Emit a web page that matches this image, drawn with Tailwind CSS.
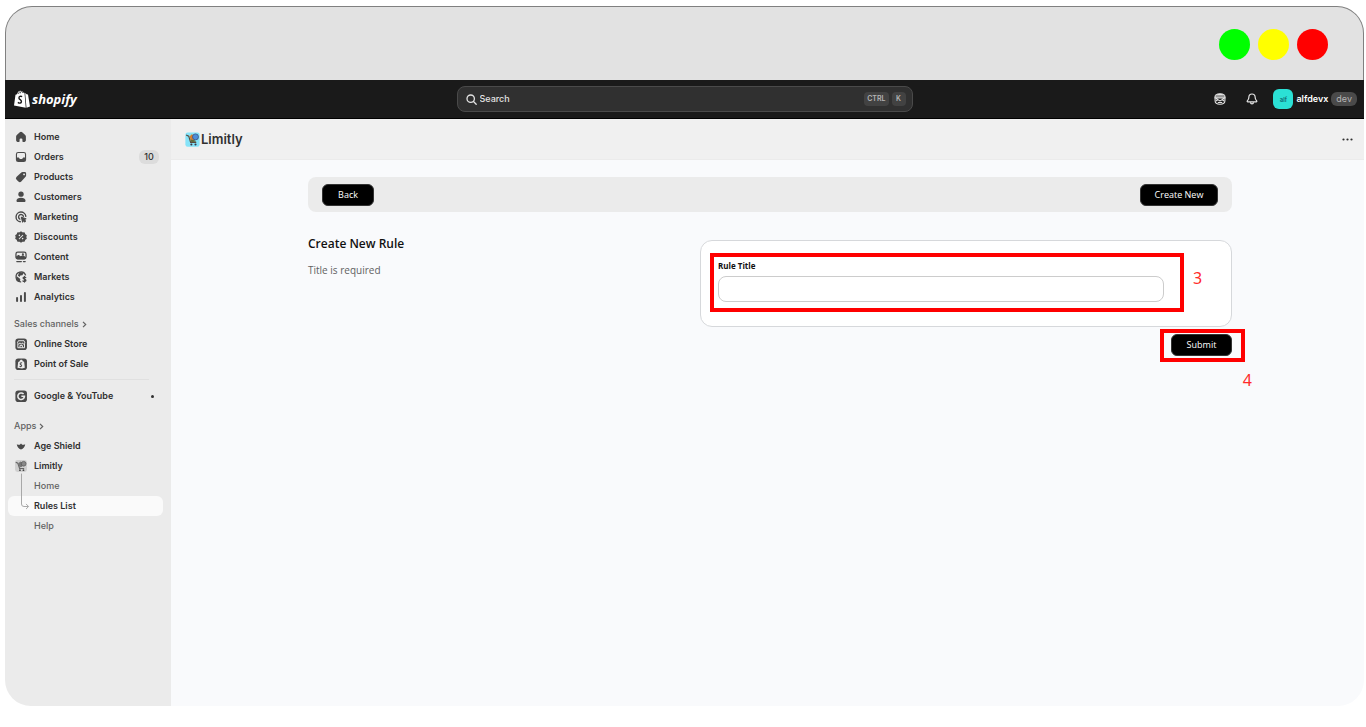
<!DOCTYPE html>
<html lang="en">
<head>
  <meta charset="UTF-8">
  <meta name="viewport" content="width=device-width, initial-scale=1.0">
  <title>Limitly - Create New Rule</title>
  <script src="https://cdn.jsdelivr.net/npm/@tailwindcss/browser@4"></script>
</head>
<body class="bg-white font-['Inter',sans-serif] text-[#303030]">
  <div class="flex flex-col min-h-screen pt-[6px] pl-[5px] pr-[2px] pb-[21px]">

    <!-- Window title bar -->
    <div class="flex h-[74px] shrink-0 items-center justify-end gap-2 rounded-t-[27px] border border-b-0 border-[#808080] bg-[#e2e2e2] pr-[35px] pt-[2px]">
      <span class="size-[31px] rounded-full bg-[#00ff00]"></span>
      <span class="size-[31px] rounded-full bg-[#ffff00]"></span>
      <span class="size-[31px] rounded-full bg-[#ff0000]"></span>
    </div>

    <!-- Shopify top bar -->
    <header class="grid h-[39px] shrink-0 grid-cols-[1fr_456px_1fr] items-center border-b border-black bg-[#1a1a1a] text-white">
      <a href="#" class="flex items-center gap-[2px] pl-[9px]">
        <svg class="h-[18px] w-[16px]" viewBox="0 0 32 36" fill="none">
          <path fill="#fff" d="M3 9.500 6 8.600C7 4.500 9.500 1.400 12.500 1.300c1-.1 1.800.4 2.400 1.200 2.400-.3 3.800 1.600 4.500 3.600l1.600-.5L23.500 35.500 0 31.200z"/>
          <path fill="#fff" d="m22.300 6 3 2.700 2.700.4L32 33l-7 2.300z"/>
          <path stroke="#1a1a1a" stroke-width="1.400" d="M8.300 8c.8-2.700 2.500-4.700 4.400-4.900M12.300 6.900c.3-2 1.200-3.700 2.700-4.100M17 5.800c0-1.200-.3-2.500-1.200-3"/>
          <path stroke="#1a1a1a" stroke-width="2.800" d="M16.300 13.300c-3-1.500-6.300-.3-6.400 2.500-.1 3.700 5.300 3.500 5 7.400-.2 3.200-3.800 4-7.200 1.500"/>
        </svg>
        <span class="font-['Open_Sans',sans-serif] text-[13px] leading-[18px] font-bold italic">shopify</span>
      </a>
      <label class="flex h-[26px] items-center rounded-lg border border-[#4a4a4a] bg-[#303030] pl-2 pr-[6px]">
        <svg class="size-[11px] shrink-0" viewBox="0 0 11 11" fill="none" stroke="#e3e3e3" stroke-width="1.300" stroke-linecap="round"><circle cx="4.700" cy="4.700" r="3.700"/><path d="m7.500 7.500 2.700 2.700"/></svg>
        <input type="text" aria-label="Search" placeholder="Search" class="ml-[3px] min-w-0 flex-1 bg-transparent text-[9px] font-medium text-white outline-none placeholder:text-[#e3e3e3]">
        <kbd class="rounded bg-[#424242] px-[3px] font-['Inter',sans-serif] text-[7px] leading-[14px] font-semibold text-[#b5b5b5]">CTRL</kbd>
        <kbd class="ml-[3px] w-[14px] rounded bg-[#424242] text-center font-['Inter',sans-serif] text-[7px] leading-[14px] font-semibold text-[#b5b5b5]">K</kbd>
      </label>
      <div class="flex items-center justify-end pr-[7px]">
        <button type="button" aria-label="Sidekick" class="mr-5">
          <svg class="size-[12px]" viewBox="0 0 22 22" fill="none" stroke="#e3e3e3" stroke-width="2"><path fill="#e3e3e3" d="M2 7C2 3.500 6 1.500 11 1.500S20 3.500 20 7z"/><path d="M2 7v7c0 4.500 4 6.500 9 6.500s9-2 9-6.500V7"/><path d="M1 9h20M3.500 10l7.500 4.500 7.500-4.500M3.500 14.500l3.500-2M18.500 14.500l-3.500-2M7 17.500h8"/><path stroke="#1a1a1a" stroke-width="1.300" d="M3 5.500h16"/></svg>
        </button>
        <button type="button" aria-label="Notifications" class="mr-[15px]">
          <svg class="h-[12px] w-[12px]" viewBox="0 0 24 24" fill="none" stroke="#e3e3e3" stroke-width="2.400" stroke-linejoin="round"><path d="M12 2c-4 0-6.300 3-6.300 6.500 0 4-1 5.300-3 7.200-.8.800-.3 2 .8 2h17c1.100 0 1.600-1.200.8-2-2-1.900-3-3.200-3-7.200C18.300 5 16 2 12 2z"/><path d="M9 18.500c0 4.500 6 4.500 6 0"/></svg>
        </button>
        <button type="button" class="flex items-center text-[9px]">
          <span class="flex size-5 items-center justify-center rounded-md bg-[#2be0d5] text-[6px] font-medium text-[#0b5a66]">alf</span>
          <span class="ml-[3px] leading-[14px] font-semibold">alfdevx</span>
          <span class="ml-[3px] rounded-md bg-[#4a4a4a] px-[5px] leading-[14px] text-[#b5b5b5]">dev</span>
        </button>
      </div>
    </header>

    <div class="flex flex-1 overflow-hidden rounded-b-[26px]">

      <!-- Sidebar -->
      <nav class="w-[166px] shrink-0 bg-[#ebebeb] pt-2 pl-[3px] pr-2 text-[9px] leading-5 font-semibold">
        <ul>
          <li><a href="#" class="flex h-5 items-center gap-[6px] pl-[6px]">
            <svg class="size-[14px]" viewBox="0 0 20 20" fill="#4a4a4a"><path d="M8.300 3.200a2.600 2.600 0 0 1 3.400 0l4.300 3.900c.6.600 1 1.300 1 2.200v5.500c0 1.200-.9 2.200-2.100 2.200H13c-.6 0-1-.4-1-1v-2.500a1.500 1.500 0 0 0-1.500-1.500h-1A1.500 1.500 0 0 0 8 13.500V16c0 .6-.4 1-1 1H5.100C3.900 17 3 16 3 14.800V9.300c0-.9.400-1.600 1-2.200z"/></svg>
            Home</a></li>
          <li><a href="#" class="flex h-5 items-center gap-[6px] pl-[6px]">
            <svg class="size-[14px]" viewBox="0 0 20 20" fill="#4a4a4a"><path fill-rule="evenodd" d="M6 2.700h8A3.300 3.300 0 0 1 17.300 6v8a3.300 3.300 0 0 1-3.300 3.300H6A3.300 3.300 0 0 1 2.700 14V6A3.300 3.300 0 0 1 6 2.700zM6 4.300A1.700 1.700 0 0 0 4.300 6v4.800h1.900c.5 0 .9.200 1.200.6l.7 1c.2.200.4.300.6.300h2.600c.2 0 .4-.1.600-.3l.7-1c.3-.4.700-.6 1.200-.6h1.900V6A1.700 1.700 0 0 0 14 4.300z"/></svg>
            Orders<span class="ml-auto mr-1 w-5 rounded-md bg-[#dcdcdc] text-center leading-[14px] font-medium">10</span></a></li>
          <li><a href="#" class="flex h-5 items-center gap-[6px] pl-[6px]">
            <svg class="size-[14px]" viewBox="0 0 20 20" fill="#4a4a4a"><path fill-rule="evenodd" d="M10.400 3.500c.5-.5 1.200-.8 1.900-.8h3c1.100 0 2 .9 2 2v3c0 .8-.3 1.500-.8 2.100l-6.100 6.500a2.900 2.900 0 0 1-4.100.1l-2.600-2.600a2.900 2.900 0 0 1 .1-4.200zM14 7.500A1.300 1.300 0 1 0 14 5a1.300 1.300 0 0 0 0 2.500z"/></svg>
            Products</a></li>
          <li><a href="#" class="flex h-5 items-center gap-[6px] pl-[6px]">
            <svg class="size-[14px]" viewBox="0 0 20 20" fill="#4a4a4a"><circle cx="10" cy="6" r="3.800"/><path d="M10 11c-3.600 0-6.500 1.500-6.500 4.200 0 1.200.8 1.800 1.800 1.800h9.400c1 0 1.800-.6 1.800-1.800C16.500 12.500 13.600 11 10 11z"/></svg>
            Customers</a></li>
          <li><a href="#" class="flex h-5 items-center gap-[6px] pl-[6px]">
            <svg class="size-[14px]" viewBox="0 0 20 20" fill="none" stroke="#4a4a4a" stroke-width="2" stroke-linecap="round"><path d="M9 16.800A7 7 0 1 1 16.900 9"/><path d="M8.300 13A3.500 3.500 0 1 1 13.400 9"/><path fill="#4a4a4a" stroke-linejoin="round" stroke-width="1.500" d="m10.500 10.500 6.500 2-2.500 1.300 2 2-1.200 1.200-2-2-1 2.300z"/></svg>
            Marketing</a></li>
          <li><a href="#" class="flex h-5 items-center gap-[6px] pl-[6px]">
            <svg class="size-[14px]" viewBox="0 0 20 20" fill="#4a4a4a"><path stroke="#4a4a4a" stroke-width="2" stroke-linejoin="round" d="m10 3 2 1.500 2.500-.3.800 2.500 2 1.300-.8 2 .8 2-2 1.300-.8 2.500-2.500-.3L10 17l-2-1.500-2.500.3-.8-2.500-2-1.300.8-2-.8-2 2-1.300.8-2.500 2.500.3z"/><path stroke="#ebebeb" stroke-width="1.500" stroke-linecap="round" d="m7.500 12.500 5-5"/><circle cx="7.700" cy="7.700" r="1.100" fill="#ebebeb"/><circle cx="12.300" cy="12.300" r="1.100" fill="#ebebeb"/></svg>
            Discounts</a></li>
          <li><a href="#" class="flex h-5 items-center gap-[6px] pl-[6px]">
            <svg class="size-[14px]" viewBox="0 0 20 20" fill="none" stroke="#4a4a4a" stroke-width="1.800" stroke-linecap="round"><rect x="2.800" y="3" width="14.400" height="9.600" rx="2.600"/><path fill="#4a4a4a" stroke-linejoin="round" d="m3.500 10 3-2 2.500 2 4-1.500 3.500 2.500-1 1.200H5z"/><circle cx="12.700" cy="6.300" r=".6" fill="#4a4a4a"/><path d="M4 16.600h6.500M13.500 16.600H16"/></svg>
            Content</a></li>
          <li><a href="#" class="flex h-5 items-center gap-[6px] pl-[6px]">
            <svg class="size-[14px]" viewBox="0 0 20 20" fill="none" stroke="#4a4a4a" stroke-width="1.800" stroke-linecap="round"><path d="M9.500 17A7.100 7.100 0 1 1 16.500 7"/><path fill="#4a4a4a" stroke="none" d="M3.500 8.500 9 13l-.5 4C5 16.500 2.500 13 3.500 8.500zM8 3l6 1-2 3.500-3 .5-1 2-2.500-2z"/><path d="M16.700 10.700c-1-1-3.700-.9-3.700.8 0 2 4 1.200 4 3.300 0 1.800-2.900 2-4.200.8M15 9.200v8"/></svg>
            Markets</a></li>
          <li><a href="#" class="flex h-5 items-center gap-[6px] pl-[6px]">
            <svg class="size-[14px]" viewBox="0 0 20 20" fill="#4a4a4a"><rect x="3" y="10" width="2.800" height="7" rx="1.300"/><rect x="8.600" y="7" width="2.800" height="10" rx="1.300"/><rect x="14.200" y="3" width="2.800" height="14" rx="1.300"/></svg>
            Analytics</a></li>
        </ul>

        <a href="#" class="mt-[7px] flex h-5 items-center gap-[3px] pl-[6px] font-medium text-[#616161]">Sales channels
          <svg class="h-[7px] w-[5px]" viewBox="0 0 5 7" fill="none" stroke="#616161" stroke-width="1.200"><path d="m1 .8 2.700 2.700L1 6.200"/></svg></a>
        <ul>
          <li><a href="#" class="flex h-5 items-center gap-[6px] pl-[6px]">
            <svg class="size-[14px]" viewBox="0 0 20 20" fill="none"><rect x="2" y="2" width="16.500" height="16.500" rx="4" fill="#4a4a4a"/><path stroke="#ebebeb" stroke-width="1.400" d="M5.500 10v5.300h9.500V10M6.300 5.300h8l1.200 3c0 2.300-3.400 2.300-3.400 0 0 2.300-3.600 2.300-3.600 0 0 2.300-3.500 2.300-3.500 0zM8.500 15v-3h3.500v3"/></svg>
            Online Store</a></li>
          <li><a href="#" class="flex h-5 items-center gap-[6px] pl-[6px]">
            <svg class="size-[14px]" viewBox="0 0 20 20" fill="none"><rect x="2" y="2" width="16.500" height="16.500" rx="4" fill="#4a4a4a"/><path fill="#ebebeb" d="m6 7 1.700-.5C8.300 4.800 9.300 4 10.500 4s1.800.8 2 2l2 .8 1 8.700-4 1L5 15.300z"/><path stroke="#4a4a4a" stroke-width="1.500" d="M11.500 8.500c-1.500-.7-2.700 0-2.700 1.200 0 1.500 2.200 1.300 2.100 2.900-.1 1.200-1.700 1.500-2.900.6"/></svg>
            Point of Sale</a></li>
        </ul>
        <hr class="mt-[5px] mb-[6px] ml-[6px] mr-[14px] border-[#e0e0e0]">
        <a href="#" class="flex h-5 items-center gap-[6px] pl-[6px]">
          <svg class="size-[14px]" viewBox="0 0 20 20" fill="none"><rect x="2" y="2" width="16.500" height="16.500" rx="4" fill="#4a4a4a"/><path stroke="#ebebeb" stroke-width="2.200" d="M13.700 7.200a4.700 4.700 0 1 0 1.200 3.300h-4.400"/></svg>
          Google &amp; YouTube<span class="ml-auto mr-[9px] size-[3px] rounded-full bg-[#303030]"></span></a>

        <a href="#" class="mt-[10px] flex h-5 items-center gap-[3px] pl-[6px] font-medium text-[#616161]">Apps
          <svg class="h-[7px] w-[5px]" viewBox="0 0 5 7" fill="none" stroke="#616161" stroke-width="1.200"><path d="m1 .8 2.700 2.700L1 6.200"/></svg></a>
        <ul class="relative">
          <li><a href="#" class="flex h-5 items-center gap-[6px] pl-[6px]">
            <svg class="size-[14px]" viewBox="0 0 20 20" fill="#4a4a4a"><path d="M4 7.500c1.500.8 3 1 4.300.8L10 6.500l1.700 1.800c1.300.2 2.800 0 4.300-.8-.4 3.500-2.500 6.300-6 7.500-3.500-1.200-5.600-4-6-7.500z"/></svg>
            Age Shield</a></li>
          <li><a href="#" class="flex h-5 items-center gap-[6px] pl-[6px]">
            <svg class="size-[14px]" viewBox="0 0 20 20" fill="none"><rect x="1.500" y="1.500" width="17" height="17" rx="3.500" fill="#cfcfcf"/><path stroke="#666" stroke-width="1.600" d="M2.500 4.500 5.500 6l2.500 7.500h6.500"/><path fill="#777" d="m6 6.500 3-3 3 1.500-.5 6L8 12z"/><circle cx="13.800" cy="6.800" r="3.400" fill="#888" stroke="#555"/><circle cx="8.500" cy="16" r="1.300" fill="#444"/><circle cx="13.500" cy="16" r="1.300" fill="#444"/></svg>
            Limitly</a></li>
          <li><a href="#" class="block h-5 pl-[26px] font-medium text-[#616161]">Home</a></li>
          <li><a href="#" class="block h-5 rounded-md bg-[#fafafa] pl-[26px]">Rules List</a></li>
          <li><a href="#" class="block h-5 pl-[26px] font-medium text-[#616161]">Help</a></li>
          <!-- branch line down to the selected item -->
          <svg class="absolute top-[37px] left-[12px] h-[38px] w-[10px]" viewBox="0 0 10 38" fill="none" stroke="#a8a8a8" stroke-linecap="round"><path d="M1.500 1v30q0 2.500 2.500 2.500h4M6.300 31.200l2.300 2.300-2.300 2.300"/></svg>
        </ul>
      </nav>

      <!-- App content -->
      <main class="min-w-0 flex-1 bg-[#f9fafc]">
        <div class="flex h-[41px] items-center border-b border-[#ebebeb] bg-[#f0f0f0] pl-[14px] pr-[11px]">
          <svg class="size-[15px]" viewBox="0 0 20 20" fill="none"><rect x=".5" y=".5" width="19" height="19" rx="3" fill="#85e3f8"/><path stroke="#594a40" stroke-width="1.600" d="M1.500 4 5 5.500l2.500 8.300H15"/><path fill="#d9812c" d="m6 6 3-3 3 1.500-.3 7-3.700.8z"/><path fill="#5d6b3c" d="m7 10 6 1 2 1.700-6.500.8z"/><circle cx="14" cy="6.500" r="4" fill="#4e8ed8" stroke="#39507f"/><circle cx="8.500" cy="16.600" r="1.400" fill="#3b3340"/><circle cx="14" cy="16.600" r="1.400" fill="#3b3340"/></svg>
          <h1 class="ml-[1px] text-[13px] leading-5 font-semibold">Limitly</h1>
          <button type="button" aria-label="More actions" class="ml-auto">
            <svg class="h-[3px] w-[11px]" viewBox="0 0 11 3" fill="#303030"><circle cx="1.500" cy="1.500" r="1.100"/><circle cx="5.500" cy="1.500" r="1.100"/><circle cx="9.500" cy="1.500" r="1.100"/></svg>
          </button>
        </div>

        <div class="pt-[17px] pl-[5px] font-['Open_Sans',sans-serif] text-[#111]">
          <div class="mx-auto max-w-[924px]">
            <div class="flex h-[35px] items-center justify-between rounded-lg bg-[#ebebeb] pl-[14px] pr-[14px]">
              <button type="button" class="h-[22px] w-[52px] rounded-md border border-[#333] bg-black text-[9px] font-medium text-white">Back</button>
              <button type="button" class="h-[22px] w-[78px] rounded-md border border-[#333] bg-black text-[9px] font-medium text-white">Create New</button>
            </div>

            <form class="mt-7 grid grid-cols-[392px_1fr]">
              <div class="-mt-[6px]">
                <h2 class="text-[12px] leading-5 font-semibold">Create New Rule</h2>
                <p class="mt-[6px] text-[10px] leading-5 text-[#616161]">Title is required</p>
              </div>
              <div>
                <div class="relative h-[87px] rounded-xl border border-[#d6d8db] bg-white px-[17px] pt-[17px]">
                  <label for="title" class="block text-[8px] leading-4 font-bold">Rule Title</label>
                  <input id="title" type="text" class="mt-[2px] block h-[26px] w-[446px] rounded-lg border border-[#ccc] bg-white px-2 text-[10px] outline-none">
                  <!-- step 3 marker -->
                  <span class="pointer-events-none absolute top-[12px] left-[9px] h-[59px] w-[474px] border-4 border-[#ff0000]"></span>
                  <span class="absolute top-[26px] left-[492px] font-['Noto_Sans',sans-serif] text-base leading-[22px] text-[#ff2a2a]">3</span>
                </div>
                <div class="relative mt-[7px] flex justify-end">
                  <button type="submit" class="h-[22px] w-[61px] rounded-md border border-[#333] bg-black text-[9px] font-medium text-white">Submit</button>
                  <!-- step 4 marker -->
                  <span class="pointer-events-none absolute -top-[5px] -right-[13px] h-[33px] w-[85px] border-4 border-[#ff0000]"></span>
                  <span class="absolute top-[35px] -right-[20px] font-['Noto_Sans',sans-serif] text-base leading-[22px] text-[#ff2a2a]">4</span>
                </div>
              </div>
            </form>
          </div>
        </div>
      </main>
    </div>
  </div>
</body>
</html>
